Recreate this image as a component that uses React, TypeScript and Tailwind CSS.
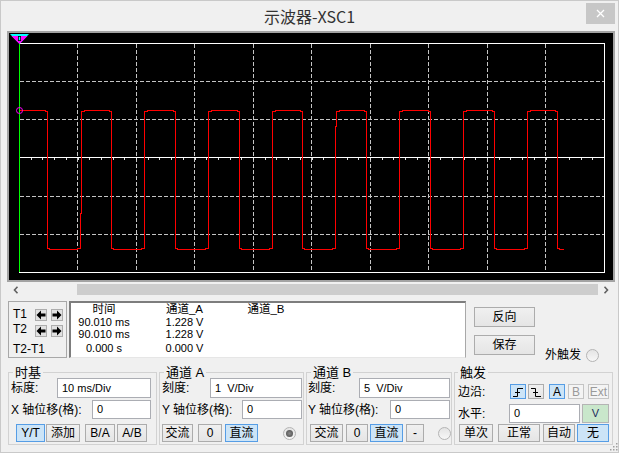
import React from "react";

const F = "font-['Liberation_Sans','Noto_Sans_CJK_SC',sans-serif]";

function Scope() {
  const vx = [77, 136, 194, 253, 311, 370, 428, 487, 545];
  const hy = [81, 119, 196, 234];
  const rises = [80, 144, 208, 272, 335, 399, 463, 527];
  const falls = [47, 111, 175, 239, 302, 366, 430, 494, 557];
  let d = "M19.5 110.5";
  falls.forEach((f, i) => {
    d += ` H${f - 1.5} V111.5 H${f + 0.5} V248.5 H${f + 2.5} V249.5`;
    if (i < rises.length) {
      const r = rises[i];
      d += ` H${r - 2.5} V248.5 H${r + 0.5}`;
      if (r === 80) d += " V213.5 H81.5 V111.5 H84.5 V110.5";
      else if (r === 335) d += " V126.5 H336.5 V111.5 H339.5 V110.5";
      else d += ` V111.5 H${r + 3.5} V110.5`;
    }
  });
  d += " H563.5";
  const ticks: number[] = [];
  for (let k = 1; k < 50; k++) ticks.push(Math.round(19 + 11.7 * k) + 0.5);
  return (
    <svg width="604" height="247" viewBox="9 33 604 247" className="block">
      <rect x="9" y="33" width="604" height="247" fill="#000" />
      {vx.map((x) => (
        <line key={x} x1={x + 0.5} y1="44" x2={x + 0.5} y2="272" stroke="#c4c4c4" strokeWidth="1" strokeDasharray="4 2" shapeRendering="crispEdges" />
      ))}
      {hy.map((y) => (
        <line key={y} x1="20" y1={y + 0.5} x2="604" y2={y + 0.5} stroke="#c4c4c4" strokeWidth="1" strokeDasharray="4 2" shapeRendering="crispEdges" />
      ))}
      <rect x="19.5" y="43.5" width="585" height="229" fill="none" stroke="#ffffff" strokeWidth="1" shapeRendering="crispEdges" />
      <line x1="19.5" y1="157.5" x2="604.5" y2="157.5" stroke="#ffffff" strokeWidth="1" shapeRendering="crispEdges" />
      {ticks.map((x) => (
        <line key={x} x1={x} y1="158" x2={x} y2="160" stroke="#e0e0e0" strokeWidth="1" shapeRendering="crispEdges" />
      ))}
      <path d={d} fill="none" stroke="#ff0000" strokeWidth="1" shapeRendering="crispEdges" />
      <line x1="19.5" y1="42" x2="19.5" y2="272" stroke="#00ff00" strokeWidth="1" shapeRendering="crispEdges" />
      <circle cx="19.5" cy="110.5" r="3" fill="none" stroke="#ff00ff" strokeWidth="1" />
      <polygon points="10,34 29,34 19.5,44" fill="#00ffff" />
      <polygon points="11.5,36 27.5,36 19.5,44" fill="#ff00ff" />
      <rect x="18" y="36" width="3" height="5" fill="#000" />
      <rect x="18.8" y="36.8" width="1.4" height="3.4" fill="#00ffff" />
    </svg>
  );
}

function Btn({
  w,
  v = "n",
  children,
}: {
  w: string;
  v?: "n" | "s" | "d";
  children: React.ReactNode;
}) {
  const base = "h-full flex items-center justify-center border text-[12px] leading-none";
  const st =
    v === "s"
      ? "border-[#569de5] bg-[#cce4f7] text-black"
      : v === "d"
      ? "border-[#c4c4c4] bg-[#f4f4f4] text-[#9a9a9a]"
      : "border-[#acacac] bg-linear-to-b from-[#f0f0f0] to-[#e5e5e5] text-black";
  return <div className={`${base} ${st} ${w}`}>{children}</div>;
}

function Input({ w, children }: { w: string; children: React.ReactNode }) {
  return (
    <div className={`h-full border border-[#abadb3] bg-white pl-[4px] flex items-center whitespace-pre text-[11px] text-black ${w}`}>
      {children}
    </div>
  );
}

function Radio({ on = false }: { on?: boolean }) {
  return (
    <div className="w-[13px] h-[13px] rounded-full border border-[#b4b4b4] bg-linear-to-b from-[#e4e4e4] to-[#f7f7f7] flex items-center justify-center self-center">
      {on && <div className="w-[7px] h-[7px] rounded-full bg-radial from-[#8a8a8a] to-[#4a4a4a]" />}
    </div>
  );
}

function ArrowBtn({ dir }: { dir: "l" | "r" }) {
  return (
    <div className="w-[12px] h-[12px] border border-[#adadad] bg-[#e1e1e1] flex items-center justify-center">
      <svg width="10" height="10" viewBox="0 0 10 10">
        {dir === "l" ? (
          <polygon points="0.5,5 5,0.5 5,3.5 9.5,3.5 9.5,6.5 5,6.5 5,9.5" fill="#000" />
        ) : (
          <polygon points="9.5,5 5,0.5 5,3.5 0.5,3.5 0.5,6.5 5,6.5 5,9.5" fill="#000" />
        )}
      </svg>
    </div>
  );
}

function Group({
  title,
  w,
  tml,
  children,
}: {
  title: React.ReactNode;
  w: string;
  tml: string;
  children: React.ReactNode;
}) {
  return (
    <div className={`h-[73px] border border-[#d2d2d2] ${w}`}>
      <div className={`-mt-[9px] px-[2px] w-fit h-[18px] leading-[18px] bg-[#f0f0f0] text-[13px] text-black ${tml}`}>{title}</div>
      {children}
    </div>
  );
}

export default function App() {
  return (
    <div className={`w-[619px] h-[453px] bg-[#f0f0f0] relative overflow-hidden flex flex-col shadow-[inset_0_0_0_1px_#c9c9c9] ${F}`}>
      {/* Title bar */}
      <div className="h-[31px] grid grid-cols-[1fr_auto_1fr]">
        <div />
        <div className="self-center text-[16px] text-[#333] font-['Noto_Sans_CJK_SC',sans-serif] leading-none">示波器-XSC1</div>
        <div className="justify-self-end mt-[3px] mr-[4px] w-[29px] h-[21px] bg-[#c7c7c7] flex items-center justify-center">
          <svg width="9" height="9" viewBox="0 0 9 9">
            <path d="M1 1 L8 8 M8 1 L1 8" stroke="#fff" strokeWidth="1.3" />
          </svg>
        </div>
      </div>

      {/* Scope */}
      <div className="ml-[7px] w-[608px] h-[251px] border-2 border-[#a3a3a3] bg-black">
        <Scope />
      </div>

      {/* Scrollbar */}
      <div className="mt-[2px] ml-[8px] w-[606px] h-[11px] flex">
        <div className="w-[16px] h-full flex items-center justify-center">
          <svg width="6" height="8" viewBox="0 0 6 8">
            <path d="M4.5 0.8 L1.5 4 L4.5 7.2" fill="none" stroke="#606060" strokeWidth="1.6" />
          </svg>
        </div>
        <div className="w-[53px]" />
        <div className="flex-1 h-full bg-[#cdcdcd]" />
        <div className="w-[16px] h-full flex items-center justify-center">
          <svg width="6" height="8" viewBox="0 0 6 8">
            <path d="M1.5 0.8 L4.5 4 L1.5 7.2" fill="none" stroke="#606060" strokeWidth="1.6" />
          </svg>
        </div>
      </div>

      {/* Middle section */}
      <div className="mt-[6px] ml-[8px] h-[57px] flex">
        <div className="w-[59px] h-full border border-[#a8a8a8] flex flex-col pl-[4px] text-[12px] text-black">
          <div className="mt-[7px] h-[12px] flex items-center">
            <span className="w-[22px] -mt-[2px]">T1</span>
            <ArrowBtn dir="l" />
            <div className="ml-[4px]"><ArrowBtn dir="r" /></div>
          </div>
          <div className="mt-[4px] h-[12px] flex items-center">
            <span className="w-[22px] -mt-[4px]">T2</span>
            <ArrowBtn dir="l" />
            <div className="ml-[4px]"><ArrowBtn dir="r" /></div>
          </div>
          <div className="mt-[6px] h-[12px] flex items-center">T2-T1</div>
        </div>

        <div className="ml-[2px] w-[397px] h-full bg-white border-l-2 border-t-2 border-l-[#7d7d7d] border-t-[#7d7d7d] border-r border-r-[#a8a8a8] border-b border-b-[#e6e6e6] grid grid-cols-[66px_95px_68px] grid-rows-[14px_11px_12px_16px] content-start text-black">
          <div className="flex items-center justify-center text-[11.5px]">时间</div>
          <div className="flex items-center justify-center text-[11.5px]">通道_A</div>
          <div className="flex items-center justify-center text-[11.5px]">通道_B</div>
          <div className="flex items-center justify-center text-[11px]">90.010 ms</div>
          <div className="flex items-center justify-center text-[11px]">1.228 V</div>
          <div />
          <div className="flex items-center justify-center text-[11px]">90.010 ms</div>
          <div className="flex items-center justify-center text-[11px]">1.228 V</div>
          <div />
          <div className="flex items-center justify-center text-[11px]">0.000 s</div>
          <div className="flex items-center justify-center text-[11px]">0.000 V</div>
          <div />
        </div>

        <div className="ml-[8px] w-[61px] flex flex-col pt-[6px]">
          <div className="h-[20px]"><Btn w="w-[61px]">反向</Btn></div>
          <div className="mt-[8px] h-[20px]"><Btn w="w-[61px]">保存</Btn></div>
        </div>

        <div className="ml-[10px] mt-[47px] h-[14px] flex items-center">
          <span className="text-[12px] text-black">外触发</span>
          <div className="ml-[5px]"><Radio /></div>
        </div>
      </div>

      {/* Bottom groups */}
      <div className="mt-[14px] ml-[8px] flex h-[73px] text-[12px] text-black">
        <Group title="时基" w="w-[149px]" tml="ml-[4px]">
          <div className="-mt-[4px] h-[20px] flex items-center">
            <div className="w-[48px] pl-[2px]">标度:</div>
            <Input w="w-[94px]">10 ms/Div</Input>
          </div>
          <div className="mt-[2px] h-[19px] flex items-center">
            <div className="w-[83px] pl-[2px] whitespace-pre">X 轴位移(格):</div>
            <Input w="w-[59px]">0</Input>
          </div>
          <div className="mt-[5px] h-[18px] flex pl-[7px]">
            <Btn w="w-[29px]" v="s">Y/T</Btn>
            <div className="ml-[1px]"><Btn w="w-[34px]">添加</Btn></div>
            <div className="ml-[5px]"><Btn w="w-[30px]">B/A</Btn></div>
            <div className="ml-[2px]"><Btn w="w-[30px]">A/B</Btn></div>
          </div>
        </Group>

        <div className="ml-[2px]">
          <Group title="通道 A" w="w-[145px]" tml="ml-[4px]">
            <div className="-mt-[4px] h-[20px] flex items-center">
              <div className="w-[50px] pl-[2px]">刻度:</div>
              <Input w="w-[92px]">1  V/Div</Input>
            </div>
            <div className="mt-[2px] h-[19px] flex items-center">
              <div className="w-[82px] pl-[2px] whitespace-pre">Y 轴位移(格):</div>
              <Input w="w-[60px]">0</Input>
            </div>
            <div className="mt-[5px] h-[18px] flex pl-[2px]">
              <Btn w="w-[31px]">交流</Btn>
              <div className="ml-[5px]"><Btn w="w-[24px]">0</Btn></div>
              <div className="ml-[3px]"><Btn w="w-[33px]" v="s">直流</Btn></div>
              <div className="ml-[25px] flex items-center"><Radio on /></div>
            </div>
          </Group>
        </div>

        <div className="ml-[2px]">
          <Group title="通道 B" w="w-[146px]" tml="ml-[4px]">
            <div className="-mt-[4px] h-[20px] flex items-center">
              <div className="w-[52px] pl-[1px]">刻度:</div>
              <Input w="w-[91px]">5  V/Div</Input>
            </div>
            <div className="mt-[2px] h-[19px] flex items-center">
              <div className="w-[83px] pl-[1px] whitespace-pre">Y 轴位移(格):</div>
              <Input w="w-[60px]">0</Input>
            </div>
            <div className="mt-[5px] h-[18px] flex pl-[3px]">
              <Btn w="w-[33px]">交流</Btn>
              <div className="ml-[3px]"><Btn w="w-[22px]">0</Btn></div>
              <div className="ml-[2px]"><Btn w="w-[33px]" v="s">直流</Btn></div>
              <div className="ml-[3px]"><Btn w="w-[18px]">-</Btn></div>
              <div className="ml-[14px] flex items-center"><Radio /></div>
            </div>
          </Group>
        </div>

        <div className="ml-[2px]">
          <Group title="触发" w="w-[159px]" tml="ml-[3px]">
            <div className="mt-[2px] h-[15px] flex items-center">
              <div className="w-[55px] pl-[3px]">边沿:</div>
              <Btn w="w-[16px]" v="s">
                <svg width="12" height="12" viewBox="0 0 12 12">
                  <path d="M1 10.5 H5.5 V2.5 H11 M3 6.5 H8" fill="none" stroke="#000" strokeWidth="1" />
                </svg>
              </Btn>
              <div className="ml-[2px] h-full">
                <Btn w="w-[16px]">
                  <svg width="12" height="12" viewBox="0 0 12 12">
                    <path d="M1 2.5 H5.5 V10.5 H11 M3 6.5 H8" fill="none" stroke="#000" strokeWidth="1" />
                  </svg>
                </Btn>
              </div>
              <div className="ml-[5px] h-full"><Btn w="w-[16px]" v="s">A</Btn></div>
              <div className="ml-[3px] h-full"><Btn w="w-[16px]" v="d">B</Btn></div>
              <div className="ml-[4px] h-full"><Btn w="w-[21px]" v="d">Ext</Btn></div>
            </div>
            <div className="mt-[5px] h-[19px] flex items-center">
              <div className="w-[54px] pl-[3px]">水平:</div>
              <Input w="w-[71px]">0</Input>
              <div className="ml-[2px] w-[27px] h-full border border-[#b4b4b4] bg-[#c9e7cb] flex items-center justify-center text-[11px] text-[#1b2a5c]">V</div>
            </div>
            <div className="mt-[1px] h-[18px] flex pl-[4px]">
              <Btn w="w-[34px]">单次</Btn>
              <div className="ml-[5px]"><Btn w="w-[42px]">正常</Btn></div>
              <div className="ml-[3px]"><Btn w="w-[32px]">自动</Btn></div>
              <div className="ml-[2px]"><Btn w="w-[32px]" v="s">无</Btn></div>
            </div>
          </Group>
        </div>
      </div>

      {/* resize grip */}
      <svg className="absolute right-[1px] bottom-[2px]" width="8" height="8" viewBox="0 0 8 8">
        <rect x="6" y="0" width="1.5" height="1.5" fill="#a0a0a0" />
        <rect x="3" y="3" width="1.5" height="1.5" fill="#a0a0a0" />
        <rect x="6" y="3" width="1.5" height="1.5" fill="#a0a0a0" />
        <rect x="0" y="6" width="1.5" height="1.5" fill="#a0a0a0" />
        <rect x="3" y="6" width="1.5" height="1.5" fill="#a0a0a0" />
        <rect x="6" y="6" width="1.5" height="1.5" fill="#a0a0a0" />
      </svg>
    </div>
  );
}
